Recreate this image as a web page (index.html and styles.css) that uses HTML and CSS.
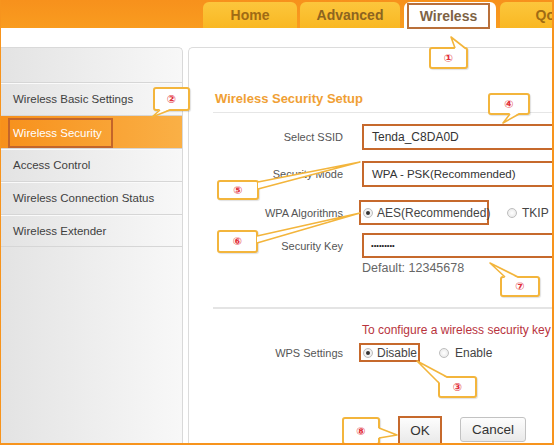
FILE: index.html
```html
<!DOCTYPE html>
<html lang="en">
<head>
<meta charset="utf-8">
<title>Wireless Security</title>
<link rel="stylesheet" href="styles.css">
</head>
<body>
<div class="frame">
  <div class="topbar">
    <div class="tab tab-home">Home</div>
    <div class="tab tab-adv">Advanced</div>
    <div class="tab tab-active"><span class="hl-tab">Wireless</span></div>
    <div class="tab tab-qos">QoS</div>
  </div>
  <div class="panels">
    <aside class="sidebar">
      <ul class="menu">
        <li>Wireless Basic Settings</li>
        <li class="active"><span class="hl-menu">Wireless Security</span></li>
        <li>Access Control</li>
        <li>Wireless Connection Status</li>
        <li>Wireless Extender</li>
      </ul>
    </aside>
    <main class="content">
      <h2 class="title">Wireless Security Setup</h2>
      <div class="row r1"><label class="lbl">Select SSID</label><div class="field">Tenda_C8DA0D</div></div>
      <div class="row r2"><label class="lbl">Security Mode</label><div class="field select">WPA - PSK(Recommended)</div></div>
      <div class="row r3"><label class="lbl">WPA Algorithms</label>
        <div class="opt-box aes"><span class="radio on"></span><span>AES(Recommended)</span></div>
        <span class="radio tkip"></span><span>TKIP</span>
      </div>
      <div class="row r4"><label class="lbl">Security Key</label><div class="field pass">•••••••••</div></div>
      <div class="note">Default: 12345678</div>
      <div class="divider"></div>
      <div class="warn">To configure a wireless security key</div>
      <div class="row r5"><label class="lbl">WPS Settings</label>
        <div class="opt-box dis"><span class="radio on"></span><span>Disable</span></div>
        <span class="radio enable"></span><span>Enable</span>
      </div>
      <div class="buttons">
        <button class="btn ok">OK</button>
        <button class="btn cancel">Cancel</button>
      </div>
    </main>
  </div>

  <div class="callout c1">①</div>
  <div class="callout c2">②</div>
  <div class="callout c3">③</div>
  <div class="callout c4">④</div>
  <div class="callout c5">⑤</div>
  <div class="callout c6">⑥</div>
  <div class="callout c7">⑦</div>
  <div class="callout c8">⑧</div>

  <svg class="tails" width="554" height="445" viewBox="0 0 554 445">
    <g fill="#fff" stroke="none">
      <polygon points="455,49 451,37 465,49"/>
      <polygon points="160,109 152,117 170,109"/>
      <polygon points="510,113 503,123 519,113"/>
      <polygon points="258,182 360,162 258,189"/>
      <polygon points="257,236 360,213 257,243"/>
      <polygon points="505,278 490,263 518,278"/>
      <polygon points="440,383 417,361 447,378"/>
      <polygon points="378,428 397,435 378,438"/>
    </g>
    <g fill="none" stroke="#f3b53c" stroke-width="1.6" stroke-linejoin="round">
      <polyline points="455,48 451,37 465,48"/>
      <polyline points="160,110 152,117 170,110"/>
      <polyline points="510,114 503,123 519,114"/>
      <polyline points="258,182 360,162 258,189"/>
      <polyline points="257,236 360,213 257,243"/>
      <polyline points="505,277 490,263 518,277"/>
      <polyline points="439,383 417,361 447,377"/>
      <polyline points="379,428 397,435 379,438"/>
    </g>
  </svg>
</div>
</body>
</html>
```

FILE: styles.css
```css
* { box-sizing: border-box; margin: 0; padding: 0; }
html, body { width: 554px; height: 445px; overflow: hidden; background: #fff; }
body { font-family: "Liberation Sans", Arial, sans-serif; font-size: 11px; color: #555; }

.frame { position: relative; width: 554px; height: 445px; overflow: hidden; display: flex; flex-direction: column; }
.frame::after { content: ""; position: absolute; inset: 0; border-left: 1px solid #f7941d; border-right: 2px solid #f7941d; border-bottom: 2px solid #f7941d; pointer-events: none; z-index: 20; }

/* top tabs */
.topbar { height: 28px; flex-shrink: 0; background: linear-gradient(#f7911c, #f99c1f); display: flex; align-items: flex-end; padding-left: 203px; gap: 3px; }
.tab { height: 26px; flex-shrink: 0; border-radius: 6px 6px 0 0; background: linear-gradient(#fcc63c, #f9b823); color: #a06b14; font-weight: bold; font-size: 14px; display: flex; align-items: center; justify-content: center; }
.tab-home { width: 94px; }
.tab-adv { width: 100px; color: #8d6420; }
.tab-active { width: 92px; margin-left: 1px; background: #fff; align-items: flex-start; justify-content: flex-start; padding: 1px 0 0 3px; }
.hl-tab { width: 83px; height: 26px; border: 2px solid #b9703a; color: #7d6244; display: flex; align-items: center; justify-content: center; }
.tab-qos { width: 100px; margin-left: 1px; }

/* panels */
.panels { display: flex; gap: 5px; margin-top: 19px; flex: 1; min-height: 0; }
.sidebar { width: 183px; flex-shrink: 0; border: 1px solid #d9d9d9; border-left: 0; border-bottom: 0; border-radius: 0 5px 0 0; background: linear-gradient(to right, #e3e3e3, #f8f8f8); padding-top: 34px; }
.menu { list-style: none; }
.menu li { height: 33px; border-top: 1px solid #d6d6d6; box-shadow: inset 0 1px 0 #fafafa; padding-left: 13px; display: flex; align-items: center; font-size: 11.5px; color: #3f3f3f; }
.menu li:last-child { border-bottom: 1px solid #d6d6d6; }
.menu li.active { background: linear-gradient(to right, #f7901b, #fab046); box-shadow: none; padding-left: 8px; align-items: flex-end; color: #fff; }
.hl-menu { height: 30px; width: 105px; border: 2px solid #c3652a; padding-left: 3px; display: flex; align-items: center; }

.content { flex: 1; min-width: 0; border: 1px solid #dcdcdc; border-right: 0; border-bottom: 0; border-radius: 5px 0 0 0; padding-top: 43px; overflow: hidden; background: #fff; }
.title { margin-left: 24px; padding-left: 2px; padding-bottom: 5px; border-bottom: 1px solid #e6e6e6; font-size: 13px; line-height: 16px; font-weight: bold; color: #f0a034; }

.row { display: flex; align-items: center; white-space: nowrap; font-size: 12px; color: #444; }
.lbl { width: 154px; flex-shrink: 0; margin-right: 19px; text-align: right; font-size: 11px; color: #555; }
.r1 { margin-top: 11px; height: 26px; }
.r2 { margin-top: 11px; height: 26px; }
.r3 { margin-top: 13px; height: 25px; }
.r4 { margin-top: 8px; height: 25px; }
.r5 { margin-top: 6px; height: 19px; }

.field { width: 200px; height: 100%; flex-shrink: 0; border: 2px solid #c6692c; padding-left: 8px; display: flex; align-items: center; font-size: 12px; color: #333; background: #fff; }
.field.select { font-size: 11.5px; }
.field.pass { font-size: 7.5px; padding-left: 7px; color: #222; }

.opt-box { height: 100%; margin-left: -3px; border: 2px solid #c6692c; display: flex; align-items: center; padding-left: 2px; flex-shrink: 0; }
.aes { width: 130px; }
.dis { width: 61px; }
.radio { width: 10px; height: 10px; flex-shrink: 0; border-radius: 50%; border: 1px solid #bdbdbd; background: radial-gradient(#fff, #e4e4e4); margin-right: 4px; position: relative; }
.radio.on::after { content: ""; position: absolute; left: 2px; top: 2px; width: 4px; height: 4px; border-radius: 50%; background: #333; }
.tkip { margin-left: 18px; margin-right: 5px; }
.enable { margin-left: 19px; margin-right: 6px; }

.note { margin-top: 3px; margin-left: 173px; line-height: 14px; font-size: 12.5px; color: #666; white-space: nowrap; }
.divider { margin-top: 32px; margin-left: 24px; height: 2px; background: #e4e4e4; }
.warn { margin-top: 14px; margin-left: 173px; line-height: 14px; font-size: 12px; color: #b8333d; white-space: nowrap; }

.buttons { display: flex; align-items: flex-start; margin-top: 54px; margin-left: 209px; }
.btn { font-family: "Liberation Sans", Arial, sans-serif; font-size: 13.5px; color: #333; background: linear-gradient(#fdfdfd, #e9e9e9); cursor: pointer; }
.ok { width: 44px; height: 29px; border: 2px solid #c6692c; }
.cancel { width: 66px; height: 25px; margin-left: 18px; margin-top: 1px; border: 1px solid #c2c2c2; border-radius: 3px; }

/* annotation callouts */
.callout { position: absolute; z-index: 5; border: 2px solid #f3b53c; border-radius: 3px; background: #fff; box-shadow: 1px 1px 1px rgba(0,0,0,0.12); display: flex; align-items: center; justify-content: center; font-family: "DejaVu Sans", sans-serif; font-size: 11px; font-weight: bold; color: #e2323c; }
.c1 { left: 429px; top: 47px; width: 39px; height: 22px; }
.c2 { left: 153px; top: 87px; width: 37px; height: 24px; }
.c3 { left: 438px; top: 376px; width: 39px; height: 22px; }
.c4 { left: 488px; top: 93px; width: 42px; height: 22px; }
.c5 { left: 217px; top: 180px; width: 42px; height: 20px; }
.c6 { left: 217px; top: 230px; width: 41px; height: 23px; }
.c7 { left: 500px; top: 276px; width: 40px; height: 21px; }
.c8 { left: 342px; top: 417px; width: 38px; height: 28px; }
.tails { position: absolute; left: 0; top: 0; z-index: 6; pointer-events: none; }
```
